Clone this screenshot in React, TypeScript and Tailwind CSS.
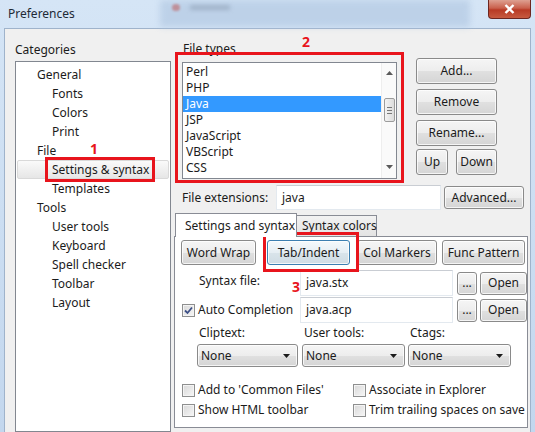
import React from "react";

const treeItems = [
  { label: "General", level: 0 },
  { label: "Fonts", level: 1 },
  { label: "Colors", level: 1 },
  { label: "Print", level: 1 },
  { label: "File", level: 0 },
  { label: "Settings & syntax", level: 1, selected: true },
  { label: "Templates", level: 1 },
  { label: "Tools", level: 0 },
  { label: "User tools", level: 1 },
  { label: "Keyboard", level: 1 },
  { label: "Spell checker", level: 1 },
  { label: "Toolbar", level: 1 },
  { label: "Layout", level: 1 },
];

const fileTypes = ["Perl", "PHP", "Java", "JSP", "JavaScript", "VBScript", "CSS"];

function Btn({
  children,
  className = "",
  focus = false,
}: {
  children: React.ReactNode;
  className?: string;
  focus?: boolean;
}) {
  return (
    <button
      className={`flex shrink-0 items-center justify-center whitespace-nowrap rounded-[3px] border text-[12px] leading-none text-[#1b1b1b] shadow-[inset_0_0_0_1px_rgba(255,255,255,0.75)] ${
        focus
          ? "border-[#3c7fb1] bg-[linear-gradient(#f4f9fc,#e6eef3_50%,#d9e4ea_51%,#cfdce4)]"
          : "border-[#8a8a8a] bg-[linear-gradient(#f5f5f5,#ededed_50%,#e0e0e0_51%,#d5d5d5)]"
      } ${className}`}
    >
      {children}
    </button>
  );
}

function Input({ value, className = "" }: { value: string; className?: string }) {
  return (
    <div
      className={`flex shrink-0 items-center border border-[#e3e9ef] border-t-[#c9cdd3] bg-white pl-[5px] text-[12px] text-[#1b1b1b] ${className}`}
    >
      {value}
    </div>
  );
}

function Check({ checked = false }: { checked?: boolean }) {
  return (
    <span className="flex h-[13px] w-[13px] shrink-0 items-center justify-center border border-[#8e8f8f] bg-[linear-gradient(135deg,#d8d8d8,#f7f7f7)] shadow-[inset_0_0_0_1px_#f4f4f4]">
      {checked && (
        <svg width="9" height="9" viewBox="0 0 9 9">
          <path d="M1 4.5 L3.5 7 L8 1.5" fill="none" stroke="#3c4f86" strokeWidth="1.8" />
        </svg>
      )}
    </span>
  );
}

function Combo({ className = "" }: { className?: string }) {
  return (
    <div
      className={`flex h-[23px] shrink-0 items-center justify-between rounded-[3px] border border-[#8a8a8a] bg-[linear-gradient(#f5f5f5,#ededed_50%,#e0e0e0_51%,#d5d5d5)] pl-[3px] pr-[7px] text-[12px] text-[#1b1b1b] shadow-[inset_0_0_0_1px_rgba(255,255,255,0.75)] ${className}`}
    >
      <span>None</span>
      <svg width="7" height="4" viewBox="0 0 7 4">
        <path d="M0 0 H7 L3.5 4 Z" fill="#1b1b1b" />
      </svg>
    </div>
  );
}

export default function App() {
  return (
    <div className="relative h-[432px] w-[535px] overflow-hidden bg-[linear-gradient(#d5e5f6,#c3d7ee)] font-['Noto_Sans',sans-serif] text-[12px] text-[#1b1b1b]">
      {/* title bar */}
      <div className="relative flex h-[28px] items-center pl-[8px]">
        <div className="absolute left-[160px] top-0 h-[27px] w-[310px] bg-[#aec5e0] opacity-60 blur-[3px]" />
        <div className="absolute left-[172px] top-[4px] h-[7px] w-[8px] rounded-sm bg-[#c0504d] opacity-50 blur-[1px]" />
        <div className="absolute left-[190px] top-[5px] h-[5px] w-[40px] bg-[#8596ab] opacity-50 blur-[2px]" />
        <span className="relative text-[12px] text-[#1e2a36]">Preferences</span>
        <div className="absolute right-[4px] top-0 flex h-[19px] w-[43px] items-center justify-center rounded-b-[4px] border border-t-0 border-[#6d2620] bg-[linear-gradient(#dea091,#c9604c_45%,#b83a25_55%,#c75a40)]">
          <svg width="11" height="10" viewBox="0 0 11 10">
            <path d="M1.5 1 L9.5 9 M9.5 1 L1.5 9" stroke="#ffffff" strokeWidth="2.4" />
          </svg>
        </div>
      </div>

      {/* body */}
      <div className="mx-[4px] flex h-[404px] border border-b-0 border-[#9fb3cb] bg-[#f0f0f0]">
        {/* categories */}
        <div className="ml-[10px] flex w-[156px] shrink-0 flex-col pt-[13px]">
          <div className="h-[16px] leading-[16px]">Categories</div>
          <div className="mt-[3px] h-[380px] border border-[#828790] bg-white pt-[3px]">
            {treeItems.map((item) =>
              item.selected ? (
                <div
                  key={item.label}
                  className="mx-[1px] flex h-[19px] items-center rounded-[2px] border border-[#d9d9d9] bg-[linear-gradient(#fafafa,#e6e6e6)] pl-[34px]"
                >
                  {item.label}
                </div>
              ) : (
                <div
                  key={item.label}
                  className={`flex h-[19px] items-center ${item.level === 0 ? "pl-[21px]" : "pl-[36px]"}`}
                >
                  {item.label}
                </div>
              )
            )}
          </div>
        </div>

        {/* right side */}
        <div className="ml-[3px] flex flex-col">
          <div className="flex">
            <div className="flex flex-col pt-[12px]">
              <div className="ml-[9px] h-[16px] leading-[16px]">File types</div>
              <div className="ml-[8px] mt-[5px] flex h-[117px] w-[215px] border border-[#828790] bg-white">
                <div className="flex-1 pt-[1px]">
                  {fileTypes.map((t) => (
                    <div
                      key={t}
                      className={`flex h-[16px] items-center pl-[3px] ${t === "Java" ? "bg-[#3399ff] text-white" : ""}`}
                    >
                      {t}
                    </div>
                  ))}
                </div>
                <div className="flex w-[15px] flex-col items-center border-l border-[#eeeeee] bg-[#fafafa] pt-[8px]">
                  <svg width="7" height="4" viewBox="0 0 7 4">
                    <path d="M0 4 H7 L3.5 0 Z" fill="#5a5a5a" />
                  </svg>
                  <div className="mt-[23px] flex h-[24px] w-[11px] flex-col items-center justify-center gap-[2px] rounded-[2px] border border-[#9c9c9c] bg-[linear-gradient(90deg,#f4f4f4,#dcdcdc)]">
                    <span className="h-px w-[5px] bg-[#777]" />
                    <span className="h-px w-[5px] bg-[#777]" />
                    <span className="h-px w-[5px] bg-[#777]" />
                  </div>
                  <svg className="mt-[43px]" width="7" height="4" viewBox="0 0 7 4">
                    <path d="M0 0 H7 L3.5 4 Z" fill="#5a5a5a" />
                  </svg>
                </div>
              </div>
            </div>
            <div className="ml-[19px] flex flex-col pt-[29px]">
              <Btn className="h-[26px] w-[81px]">Add...</Btn>
              <Btn className="mt-[5px] h-[26px] w-[81px]">Remove</Btn>
              <Btn className="mt-[5px] h-[26px] w-[81px]">Rename...</Btn>
              <div className="mt-[3px] flex gap-[8px]">
                <Btn className="h-[26px] w-[32px]">Up</Btn>
                <Btn className="h-[26px] w-[41px]">Down</Btn>
              </div>
            </div>
          </div>

          <div className="mt-[6px] flex h-[25px] items-center">
            <div className="ml-[8px] w-[94px]">File extensions:</div>
            <Input value="java" className="h-[25px] w-[165px]" />
            <Btn className="ml-[3px] h-[23px] w-[80px]">Advanced...</Btn>
          </div>

          <div className="mt-[3px] flex h-[23px] items-start whitespace-nowrap">
            <div className="relative z-10 ml-[1px] flex h-[24px] w-[122px] items-center border border-b-0 border-[#898c95] bg-white pl-[9px]">
              Settings and syntax
            </div>
            <div className="mt-[2px] flex h-[21px] w-[80px] items-center border border-b-0 border-l-0 border-[#898c95] bg-[linear-gradient(#f2f2f2,#e3e3e3)] pl-[5px]">
              Syntax colors
            </div>
          </div>

          <div className="flex h-[192px] w-[354px] flex-col overflow-hidden border border-[#898c95] bg-white">
            <div className="mt-[3px] flex h-[25px]">
              <Btn className="ml-[6px] h-[25px] w-[75px]">Word Wrap</Btn>
              <Btn focus className="ml-[11px] h-[25px] w-[83px]">Tab/Indent</Btn>
              <Btn className="ml-[7px] h-[25px] w-[80px]">Col Markers</Btn>
              <Btn className="ml-[5px] h-[25px] w-[83px]">Func Pattern</Btn>
            </div>

            <div className="mt-[5px] flex h-[26px] items-center">
              <div className="ml-[24px] w-[101px] shrink-0 -translate-y-[2px]">Syntax file:</div>
              <Input value="java.stx" className="h-[26px] w-[153px]" />
              <Btn className="ml-[4px] h-[23px] w-[20px]">...</Btn>
              <Btn className="ml-[3px] h-[23px] w-[47px]">Open</Btn>
            </div>

            <div className="mt-[1px] flex h-[26px] items-center">
              <div className="flex w-[125px] shrink-0 items-center pl-[7px]">
                <Check checked />
                <span className="ml-[3px]">Auto Completion</span>
              </div>
              <Input value="java.acp" className="h-[26px] w-[153px]" />
              <Btn className="ml-[4px] h-[23px] w-[20px]">...</Btn>
              <Btn className="ml-[3px] h-[23px] w-[47px]">Open</Btn>
            </div>

            <div className="ml-[22px] mt-[2px] flex h-[16px] leading-[16px]">
              <div className="w-[105px] pl-[2px]">Cliptext:</div>
              <div className="w-[106px] pl-[2px]">User tools:</div>
              <div className="pl-[2px]">Ctags:</div>
            </div>

            <div className="ml-[22px] mt-[3px] flex">
              <Combo className="w-[101px]" />
              <Combo className="ml-[4px] w-[103px]" />
              <Combo className="ml-[3px] w-[103px]" />
            </div>

            <div className="mt-[13px] flex h-[20px] items-center whitespace-nowrap">
              <div className="flex w-[171px] shrink-0 items-center pl-[7px]">
                <Check />
                <span className="ml-[3px]">Add to 'Common Files'</span>
              </div>
              <div className="flex items-center pl-[7px]">
                <Check />
                <span className="ml-[3px]">Associate in Explorer</span>
              </div>
            </div>
            <div className="flex h-[20px] items-center whitespace-nowrap">
              <div className="flex w-[171px] shrink-0 items-center pl-[7px]">
                <Check />
                <span className="ml-[3px]">Show HTML toolbar</span>
              </div>
              <div className="flex items-center pl-[7px]">
                <Check />
                <span className="ml-[3px]">Trim trailing spaces on save</span>
              </div>
            </div>
          </div>
        </div>
      </div>

      {/* annotations */}
      <div className="pointer-events-none absolute left-[45px] top-[157px] h-[25px] w-[110px] border-[3px] border-[#e8141c]" />
      <div className="pointer-events-none absolute left-[175px] top-[52px] h-[131px] w-[229px] border-[3px] border-[#e8141c]" />
      <div className="pointer-events-none absolute left-[263px] top-[232px] h-[40px] w-[96px] border-[3px] border-[#e8141c]" />
      <span className="absolute left-[90px] top-[138px] text-[14px] font-bold text-[#e8141c]">1</span>
      <span className="absolute left-[302px] top-[31px] text-[14px] font-bold text-[#e8141c]">2</span>
      <span className="absolute left-[292px] top-[276px] text-[14px] font-bold text-[#e8141c]">3</span>
    </div>
  );
}
